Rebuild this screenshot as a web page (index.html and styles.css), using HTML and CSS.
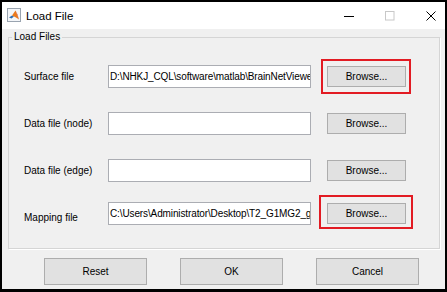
FILE: index.html
```html
<!DOCTYPE html>
<html lang="en">
<head>
  <meta charset="UTF-8">
  <title>Load File</title>
  <link rel="stylesheet" href="styles.css">
</head>
<body>
<div class="window">
  <div class="titlebar">
    <svg class="app-icon" viewBox="0 0 14 14">
      <rect x="0.5" y="0.5" width="13" height="13" fill="#f4f6f9" stroke="#9aa4b0"/>
      <path d="M2 9.5 L5 7.5 L7 8.5 L4.5 10.5 Z" fill="#2f6fb5"/>
      <path d="M5 7.5 L8.5 2.5 L12 11.5 L9 9.5 L7 8.5 Z" fill="#ea7a1e"/>
      <path d="M8.5 2.5 L10.5 6.5 L12 11.5 Z" fill="#c8352b"/>
    </svg>
    <span class="title">Load File</span>
    <div class="controls">
      <svg viewBox="0 0 10 10"><path d="M0 5.5 H10" stroke="#000" stroke-width="1"/></svg>
      <svg viewBox="0 0 10 10"><rect x="0.5" y="0.5" width="8.5" height="8.5" fill="none" stroke="#c8c8c8"/></svg>
      <svg viewBox="0 0 10 10"><path d="M0.5 0.5 L9.5 9.5 M9.5 0.5 L0.5 9.5" stroke="#000" stroke-width="1"/></svg>
    </div>
  </div>
  <div class="content">
    <fieldset class="group">
      <legend>Load Files</legend>
      <div class="rows">
        <div class="row">
          <label>Surface file</label>
          <div class="path">D:\NHKJ_CQL\software\matlab\BrainNetViewer\Data\SurfTemplate\BrainMesh_ICBM152.nv</div>
          <div class="browse-cell highlight"><button>Browse...</button></div>
        </div>
        <div class="row">
          <label>Data file (node)</label>
          <div class="path"></div>
          <div class="browse-cell"><button>Browse...</button></div>
        </div>
        <div class="row">
          <label>Data file (edge)</label>
          <div class="path"></div>
          <div class="browse-cell"><button>Browse...</button></div>
        </div>
        <div class="row row-tight">
          <label>Mapping file</label>
          <div class="path">C:\Users\Administrator\Desktop\T2_G1MG2_gm.nii</div>
          <div class="browse-cell highlight alt"><button>Browse...</button></div>
        </div>
      </div>
    </fieldset>
    <div class="actions">
      <button>Reset</button>
      <button>OK</button>
      <button>Cancel</button>
    </div>
  </div>
</div>
</body>
</html>
```

FILE: styles.css
```css
body {
  margin: 0;
  font-family: "Liberation Sans", Arial, sans-serif;
  font-size: 10px;
  color: #000;
  background: #000;
}
.window {
  width: 447px;
  height: 292px;
  box-sizing: border-box;
  border: 2px solid #000;
  border-bottom-width: 3px;
  display: flex;
  flex-direction: column;
  background: #f0f0f0;
}
.titlebar {
  height: 27px;
  flex-shrink: 0;
  background: #fff;
  display: flex;
  align-items: center;
  padding-left: 5px;
}
.app-icon {
  width: 14px;
  height: 14px;
  margin-top: -2px;
}
.title {
  margin-left: 5px;
  font-size: 11.5px;
}
.controls {
  margin-left: auto;
  display: flex;
  align-items: center;
  gap: 31px;
  padding-right: 9px;
}
.controls svg {
  display: block;
  width: 10px;
  height: 10px;
}
.content {
  flex: 1;
  display: flex;
  flex-direction: column;
}
.group {
  margin: 2px 5px 0 6px;
  padding: 22px 0 23px 3px;
  border: 1px solid #d5d5d5;
  box-shadow: 1px 1px 0 #fff;
  min-width: 0;
}
.group legend {
  padding: 0 2px;
  font-size: 10px;
  line-height: 12px;
}
.rows {
  display: flex;
  flex-direction: column;
  gap: 24px;
  margin-left: 12px;
}
.row {
  display: flex;
  align-items: center;
  height: 23px;
}
.row-tight {
  margin-top: -4px;
}
.row label {
  width: 84px;
}
.row-tight label {
  padding-top: 8px;
}
.path {
  width: 203px;
  height: 23px;
  box-sizing: border-box;
  border: 1px solid #abadb3;
  background: #fff;
  padding: 0 1px;
  line-height: 21px;
  letter-spacing: -0.12px;
  white-space: nowrap;
  overflow: hidden;
}
.browse-cell {
  position: relative;
  margin-left: 16px;
  display: flex;
}
button {
  font: inherit;
  color: #000;
  width: 79px;
  height: 21px;
  padding: 0;
  background: #e1e1e1;
  border: 1px solid #adadad;
}
.highlight::after {
  content: "";
  position: absolute;
  inset: -7px -5px -7px -6px;
  border: 2px solid #e21b23;
}
.highlight.alt::after {
  inset: -8px -7px -5px -8px;
}
.actions {
  display: flex;
  gap: 33px;
  padding-left: 42px;
  margin-top: 9px;
}
.actions button {
  width: 103px;
  height: 27px;
}
```
